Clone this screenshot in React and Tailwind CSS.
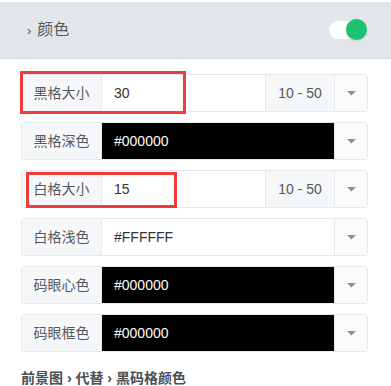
import React from "react";

const rows = [
  { label: "黑格大小", value: "30", range: "10 - 50", mark: "wide" },
  { label: "黑格深色", value: "#000000", dark: true },
  { label: "白格大小", value: "15", range: "10 - 50", mark: "narrow" },
  { label: "白格浅色", value: "#FFFFFF" },
  { label: "码眼心色", value: "#000000", dark: true },
  { label: "码眼框色", value: "#000000", dark: true },
];

function Caret() {
  return (
    <svg width="9" height="5" viewBox="0 0 9 5">
      <path d="M0 0h9L4.5 4.5z" fill="#8b909a" />
    </svg>
  );
}

function Row({ row }) {
  return (
    <div className="relative flex h-[38px] rounded-[3px] border border-[#e6e8eb] text-[14px]">
      <div className="flex w-[80px] items-center justify-center border-r border-[#e6e8eb] bg-[#f6f7f9] text-[#555a61]">
        {row.label}
      </div>
      <div
        className={
          row.dark
            ? "flex flex-1 items-center bg-black pl-[12px] text-white"
            : "flex flex-1 items-center bg-white pl-[12px] text-[#333]"
        }
      >
        {row.value}
      </div>
      {row.range && (
        <div className="flex w-[69px] items-center justify-center border-l border-[#e6e8eb] bg-[#f6f7f9] text-[#555a61]">
          {row.range}
        </div>
      )}
      <div className="flex w-[33px] items-center justify-center border-l border-[#e6e8eb] bg-[#fafbfc]">
        <Caret />
      </div>
      {row.mark === "wide" && (
        <div className="pointer-events-none absolute left-[-2px] top-[-4px] h-[43px] w-[166px] border-[3px] border-[#ef3b3b]" />
      )}
      {row.mark === "narrow" && (
        <div className="pointer-events-none absolute left-[4px] top-[1px] h-[36px] w-[151px] border-[3px] border-[#ef3b3b]" />
      )}
    </div>
  );
}

export default function App() {
  return (
    <div
      className="min-h-screen bg-white pt-[2px]"
      style={{ fontFamily: '"Liberation Sans", "Noto Sans CJK SC", sans-serif' }}
    >
      {/* Header */}
      <div className="flex h-[57px] items-center justify-between border-b border-[#d9dcdf] bg-[#e3e6e9] pl-[27px] pr-[24px]">
        <div className="flex items-center gap-[6px] text-[16px] text-[#555a61]">
          <span className="text-[13px] leading-none">›</span>
          <span>颜色</span>
        </div>
        <div className="relative h-[20px] w-[38px]">
          <div className="absolute left-0 top-[1px] h-[18px] w-[30px] rounded-full bg-white" />
          <div className="absolute right-0 top-[-1px] h-[21px] w-[21px] rounded-full bg-[#19c372] shadow-sm" />
        </div>
      </div>

      {/* Fields */}
      <div className="flex flex-col gap-[10px] pl-[21px] pr-[23px] pt-[15px]">
        {rows.map((row) => (
          <Row key={row.label} row={row} />
        ))}
      </div>

      <div className="mt-[16px] pl-[21px] text-[14px] font-bold text-[#4a4e55]">
        前景图 › 代替 › 黑码格颜色
      </div>
    </div>
  );
}
